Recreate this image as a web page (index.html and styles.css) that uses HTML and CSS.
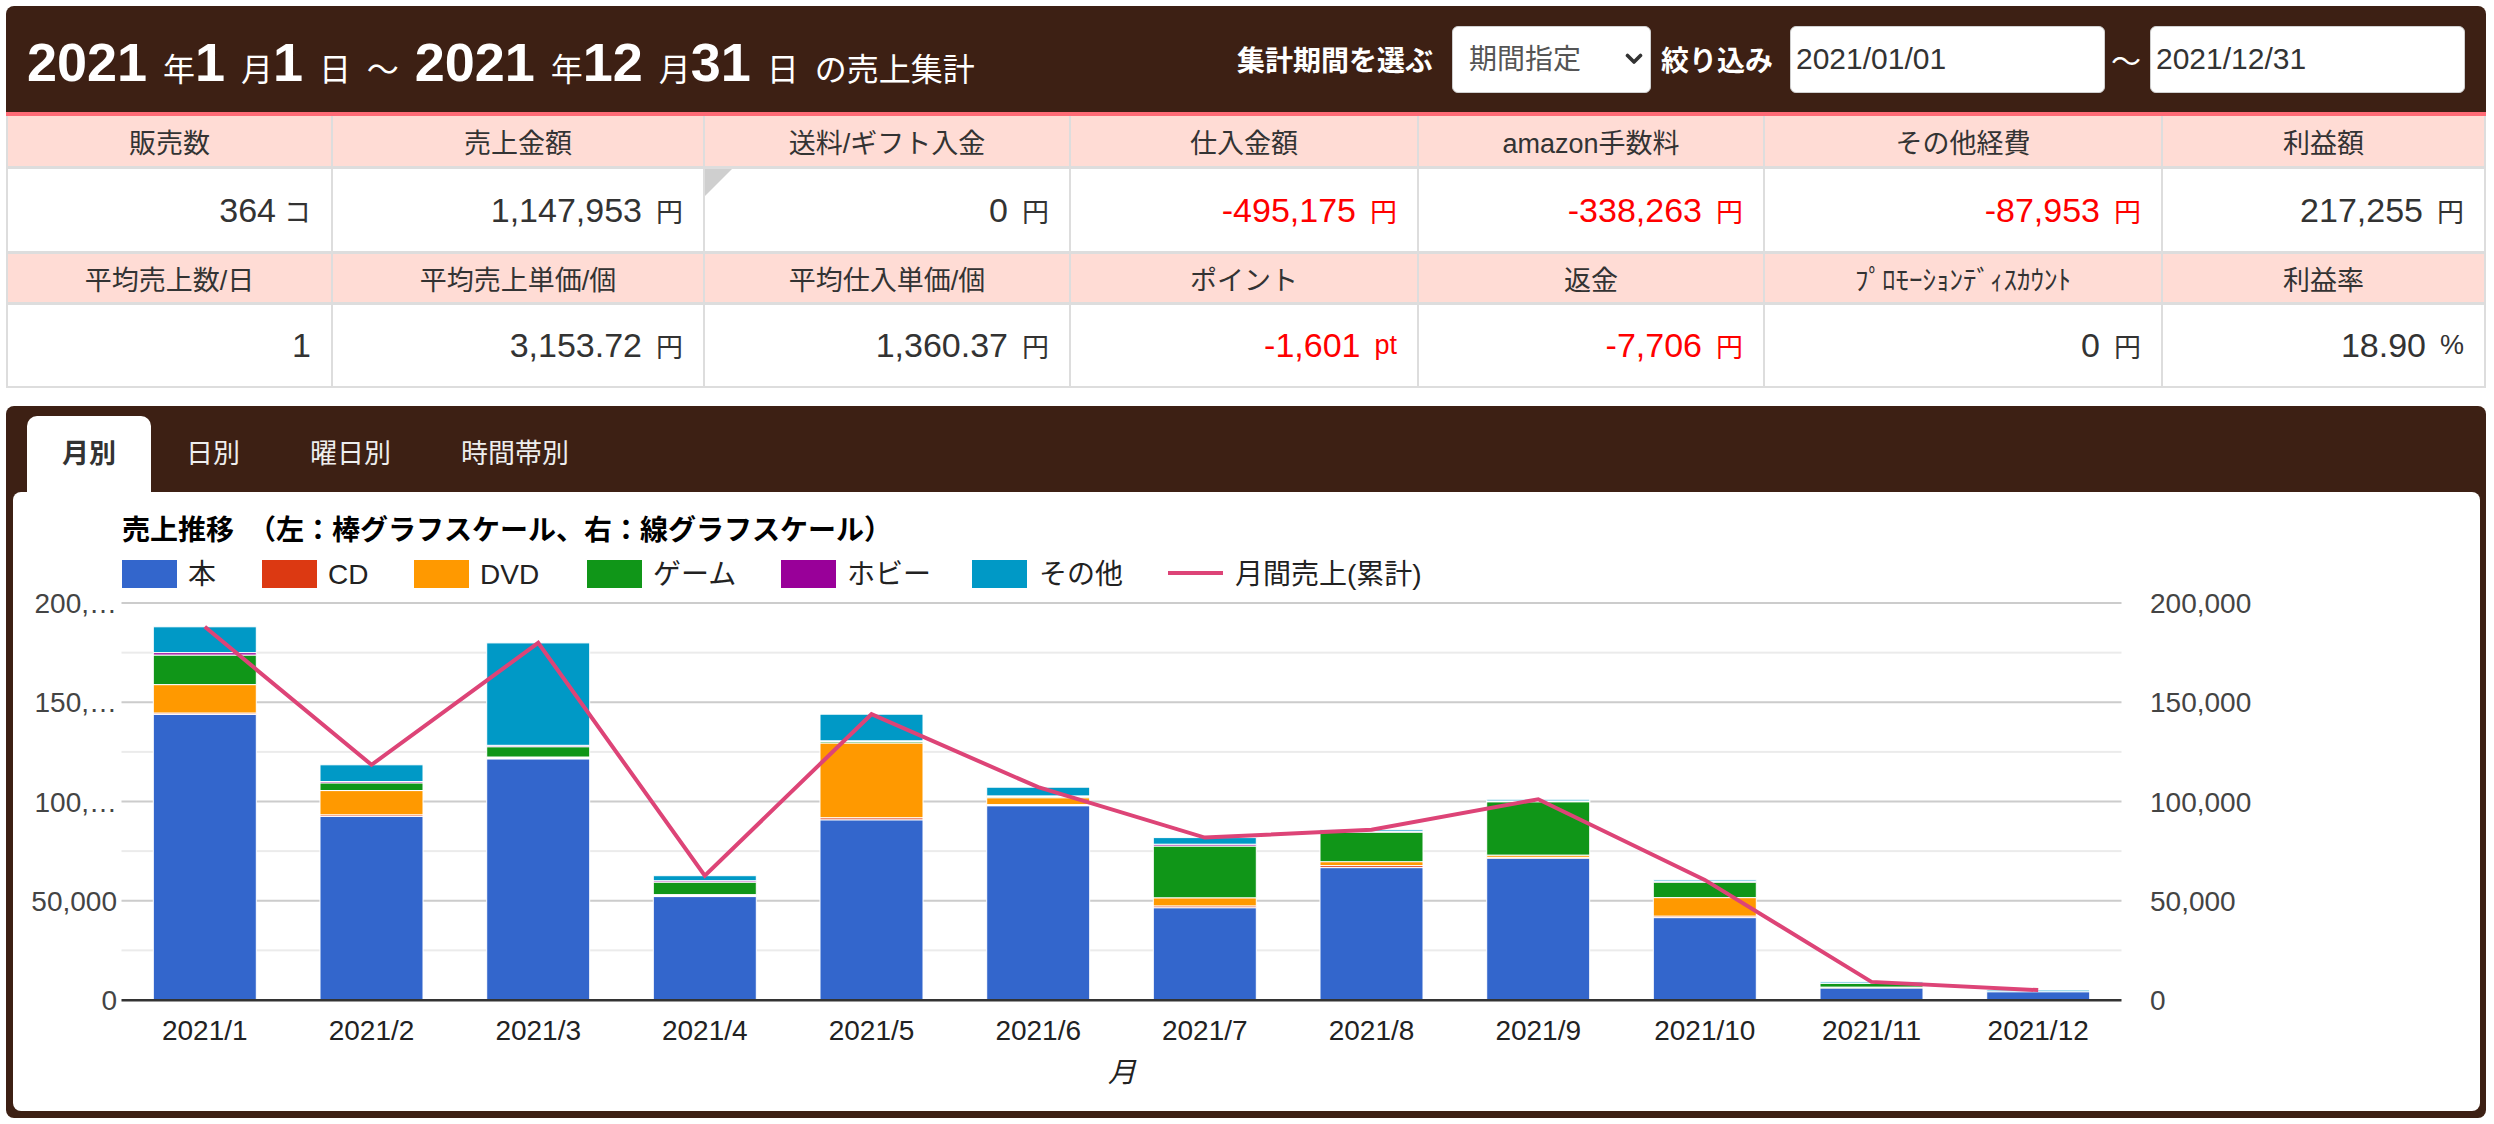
FILE: index.html
```html
<!DOCTYPE html>
<html lang="ja">
<head>
<meta charset="utf-8">
<title>売上集計</title>
<link rel="stylesheet" href="styles.css">
</head>
<body>
<div class="page">
  <header class="topbar">
    <h1 class="title"><span class="n">2021</span> 年<span class="n">1</span> 月<span class="n">1</span> 日 ～ <span class="n">2021</span> 年<span class="n">12</span> 月<span class="n">31</span> 日 の売上集計</h1>
    <div class="controls">
      <span class="ctl-label first">集計期間を選ぶ</span>
      <div class="select-wrap">
        <select class="period"><option>期間指定</option></select>
        <svg class="chev" width="18" height="12" viewBox="0 0 18 12"><path d="M2.5 2.5 L9 9 L15.5 2.5" fill="none" stroke="#333" stroke-width="3.6" stroke-linecap="round" stroke-linejoin="round"/></svg>
      </div>
      <span class="ctl-label second">絞り込み</span>
      <input class="date" type="text" value="2021/01/01">
      <span class="tilde">～</span>
      <input class="date" type="text" value="2021/12/31">
    </div>
  </header>

  <div class="stats">
    <div class="th">販売数</div>
    <div class="th">売上金額</div>
    <div class="th">送料/ギフト入金</div>
    <div class="th">仕入金額</div>
    <div class="th">amazon手数料</div>
    <div class="th">その他経費</div>
    <div class="th">利益額</div>

    <div class="td">364<span class="unit ko">コ</span></div>
    <div class="td">1,147,953<span class="unit">円</span></div>
    <div class="td note">0<span class="unit">円</span></div>
    <div class="td neg">-495,175<span class="unit">円</span></div>
    <div class="td neg">-338,263<span class="unit">円</span></div>
    <div class="td neg">-87,953<span class="unit">円</span></div>
    <div class="td">217,255<span class="unit">円</span></div>

    <div class="th">平均売上数/日</div>
    <div class="th">平均売上単価/個</div>
    <div class="th">平均仕入単価/個</div>
    <div class="th">ポイント</div>
    <div class="th">返金</div>
    <div class="th">ﾌﾟﾛﾓｰｼｮﾝﾃﾞｨｽｶｳﾝﾄ</div>
    <div class="th">利益率</div>

    <div class="td">1</div>
    <div class="td">3,153.72<span class="unit">円</span></div>
    <div class="td">1,360.37<span class="unit">円</span></div>
    <div class="td neg">-1,601<span class="unit">pt</span></div>
    <div class="td neg">-7,706<span class="unit">円</span></div>
    <div class="td">0<span class="unit">円</span></div>
    <div class="td">18.90<span class="unit">%</span></div>
  </div>

  <section class="panel">
    <nav class="tabs">
      <span class="tab active">月別</span>
      <span class="tab">日別</span>
      <span class="tab">曜日別</span>
      <span class="tab">時間帯別</span>
    </nav>
    <div class="tab-body">
      <svg id="sales-chart" class="chart" width="2467" height="619" viewBox="13 492 2467 619"></svg>
    </div>
  </section>
</div>
<script src="script.js"></script>
</body>
</html>
```

FILE: styles.css
```css
* { box-sizing: border-box; }

body {
  margin: 0;
  background: #ffffff;
  font-family: "Liberation Sans", "Noto Sans CJK JP", sans-serif;
  color: #333333;
}

.page {
  width: 2480px;
  margin: 6px 0 0 6px;
}

/* ---------- top bar ---------- */
.topbar {
  height: 110px;
  background: #3d2014;
  border-bottom: 4px solid #ff6b76;
  border-radius: 8px 8px 0 0;
  display: flex;
  align-items: center;
  justify-content: space-between;
  padding: 0 21px 0 21px;
}

.title {
  margin: 0;
  font-size: 32px;
  font-weight: normal;
  color: #ffffff;
  word-spacing: 7px;
  white-space: nowrap;
  line-height: 1;
  padding-top: 6px;
}

.title .n {
  font-size: 54px;
  font-weight: bold;
}

.controls {
  display: flex;
  align-items: center;
}

.ctl-label {
  color: #ffffff;
  font-size: 28px;
  font-weight: bold;
  white-space: nowrap;
}

.ctl-label.first { margin-right: 19px; }
.ctl-label.second { margin: 0 17px 0 10px; }

.select-wrap {
  position: relative;
  width: 199px;
  height: 67px;
}

.period {
  appearance: none;
  -webkit-appearance: none;
  width: 100%;
  height: 100%;
  border: 1px solid #cfcfcf;
  border-radius: 6px;
  background: #ffffff;
  padding: 0 0 0 16px;
  font-family: "Liberation Sans", "Noto Sans CJK JP", sans-serif;
  font-size: 28px;
  color: #555555;
}

.chev {
  position: absolute;
  right: 8px;
  top: 27px;
}

.date {
  width: 315px;
  height: 67px;
  border: 1px solid #cfcfcf;
  border-radius: 6px;
  background: #ffffff;
  padding: 0 5px;
  font-family: "Liberation Sans", "Noto Sans CJK JP", sans-serif;
  font-size: 30px;
  color: #333333;
}

.tilde {
  color: #ffffff;
  font-size: 30px;
  margin: 0 9px 0 6px;
}

/* ---------- stats table ---------- */
.stats {
  display: grid;
  grid-template-columns: 323px 370px 364px 346px 344px 396px 321px;
  grid-template-rows: 50px 82px 48px 81px;
  column-gap: 2px;
  row-gap: 3px;
  background: #dddddd;
  padding: 0 2px 2px 2px;
}

.th {
  background: #ffdcd5;
  display: flex;
  align-items: center;
  justify-content: center;
  font-size: 27px;
  color: #333333;
  white-space: nowrap;
}

.td {
  background: #ffffff;
  display: flex;
  align-items: center;
  justify-content: flex-end;
  padding-right: 20px;
  font-size: 34px;
  color: #333333;
  white-space: nowrap;
}

.td .unit {
  font-size: 27px;
  margin-left: 14px;
}

.td .unit.ko { margin-left: 8px; }

.td.neg { color: #ff0000; }

.td.note { position: relative; }

.td.note::before {
  content: "";
  position: absolute;
  left: 0;
  top: 0;
  width: 0;
  height: 0;
  border-top: 27px solid #cfcfcf;
  border-right: 27px solid transparent;
}

/* ---------- chart panel ---------- */
.panel {
  margin-top: 18px;
  background: #3d2014;
  border-radius: 8px;
  padding: 10px 6px 7px 7px;
}

.tabs {
  display: flex;
  margin-left: 14px;
}

.tab {
  height: 76px;
  line-height: 76px;
  padding: 0 35px;
  font-size: 27px;
  color: #eeeeee;
  border-radius: 10px 10px 0 0;
  white-space: nowrap;
}

.tab.active {
  background: #ffffff;
  color: #333333;
  font-weight: bold;
}

.tab-body {
  background: #ffffff;
  border-radius: 8px;
  height: 619px;
  overflow: hidden;
}

.chart {
  display: block;
}

.chart text {
  font-family: "Liberation Sans", "Noto Sans CJK JP", sans-serif;
  font-size: 28px;
}

.chart .c-title { font-weight: bold; fill: #000000; }
.chart .c-legend { fill: #222222; }
.chart .c-axis { fill: #444444; }
.chart .c-axis.left { text-anchor: end; }
.chart .c-xlabel { fill: #222222; text-anchor: middle; }
.chart .c-axis-title { fill: #222222; font-style: italic; text-anchor: middle; }
```

FILE: script.js
```js
(function () {
  var NS = 'http://www.w3.org/2000/svg';
  var svg = document.getElementById('sales-chart');
  if (!svg) { return; }

  function add(tag, attrs, text) {
    var e = document.createElementNS(NS, tag);
    for (var k in attrs) {
      if (Object.prototype.hasOwnProperty.call(attrs, k)) { e.setAttribute(k, attrs[k]); }
    }
    if (text !== undefined) { e.textContent = text; }
    svg.appendChild(e);
    return e;
  }

  var L = 121.5, R = 2121.5, B = 1000, T = 603;
  var PX = (B - T) / 200;           // px per 1,000
  var pitch = (R - L) / 12, barW = 103;
  var colors = ['#3366cc', '#dc3912', '#ff9900', '#109618', '#990099', '#0099c6'];
  var names = ['本', 'CD', 'DVD', 'ゲーム', 'ホビー', 'その他'];
  // values in thousands: 本, CD, DVD, ゲーム, ホビー, その他
  var data = [
    [143.9, 0.7, 14.3, 14.9, 1.2, 13.0],
    [92.5, 0.8, 12.2, 3.9, 0.7, 8.4],
    [121.6, 0.3, 0.5, 5.2, 0.7, 51.6],
    [52.4, 0.2, 0.5, 6.3, 0.7, 2.5],
    [90.8, 1.0, 37.7, 0.8, 0.3, 13.4],
    [97.9, 0.5, 3.5, 0.6, 0.3, 4.4],
    [46.5, 0.9, 4.1, 26.1, 0.9, 3.3],
    [66.7, 1.0, 2.0, 15.1, 0.2, 0.8],
    [71.7, 0.2, 1.1, 27.1, 0.2, 0.8],
    [41.5, 0.8, 9.3, 8.0, 0.2, 0.7],
    [6.2, 0, 0.3, 1.9, 0, 0.7],
    [4.2, 0, 0, 0, 0, 0.8]
  ];

  add('text', { x: 122, y: 540, 'class': 'c-title' }, '売上推移　（左：棒グラフスケール、右：線グラフスケール）');

  var swX = [122, 262, 414, 587, 781, 972];
  var txX = [188, 328, 480, 653, 847, 1039];
  for (var i = 0; i < 6; i++) {
    add('rect', { x: swX[i], y: 560, width: 55, height: 28, fill: colors[i] });
    add('text', { x: txX[i], y: 584, 'class': 'c-legend' }, names[i]);
  }
  add('rect', { x: 1168, y: 571, width: 55, height: 4, fill: '#dd4477' });
  add('text', { x: 1235, y: 584, 'class': 'c-legend' }, '月間売上(累計)');

  for (var g = 1; g <= 8; g++) {
    var gy = B - g * (B - T) / 8;
    add('rect', { x: L, y: gy - 1, width: R - L, height: 2, fill: (g % 2) ? '#ebebeb' : '#cccccc' });
  }

  var pts = [];
  for (var m = 0; m < 12; m++) {
    var cx = L + pitch * (m + 0.5);
    var cum = 0;
    for (var s = 0; s < 6; s++) {
      var v = data[m][s];
      if (v <= 0) { continue; }
      var y0 = B - cum * PX;
      cum += v;
      var y1 = B - cum * PX;
      add('rect', {
        x: (cx - barW / 2).toFixed(1), y: y1.toFixed(1), width: barW,
        height: Math.max(y0 - y1, 1).toFixed(1), fill: colors[s],
        stroke: '#ffffff', 'stroke-width': 1
      });
    }
    pts.push(cx.toFixed(1) + ',' + (B - cum * PX).toFixed(1));
    add('text', { x: cx.toFixed(1), y: 1040, 'class': 'c-xlabel' }, '2021/' + (m + 1));
  }

  add('rect', { x: L, y: B - 1, width: R - L, height: 2.5, fill: '#333333' });
  add('polyline', { points: pts.join(' '), fill: 'none', stroke: '#dd4477', 'stroke-width': 4 });

  var leftLabels = ['0', '50,000', '100,…', '150,…', '200,…'];
  var rightLabels = ['0', '50,000', '100,000', '150,000', '200,000'];
  for (var a = 0; a < 5; a++) {
    var ay = B - a * (B - T) / 4;
    add('text', { x: 117, y: (ay + 10).toFixed(1), 'class': 'c-axis left' }, leftLabels[a]);
    add('text', { x: 2150, y: (ay + 10).toFixed(1), 'class': 'c-axis' }, rightLabels[a]);
  }
  add('text', { x: 1122, y: 1082, 'class': 'c-axis-title' }, '月');
})();
```
